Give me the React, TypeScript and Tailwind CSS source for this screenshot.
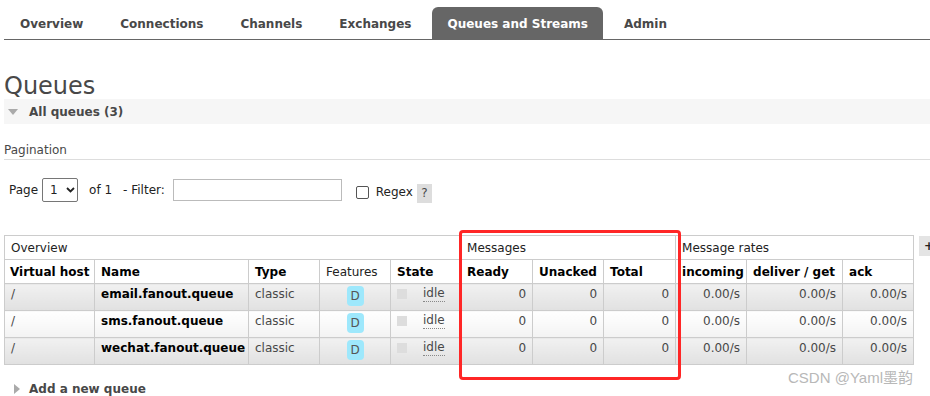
import React from "react";

const tabs = ["Overview", "Connections", "Channels", "Exchanges", "Queues and Streams", "Admin"];

const rows = [
  { name: "email.fanout.queue", alt: 1 },
  { name: "sms.fanout.queue", alt: 2 },
  { name: "wechat.fanout.queue", alt: 1 },
];

const widths = [90, 154, 71, 71, 70, 72, 71, 72, 71, 96, 71];

export default function App() {
  return (
    <div className="relative w-[930px] h-[396px] overflow-hidden bg-white pl-[4px] font-['DejaVu_Sans',Verdana,sans-serif] text-[12px] text-[#484848]">
      {/* Nav */}
      <div className="flex gap-[5px] border-b border-[#666] pt-[7px]">
        {tabs.map((t) => (
          <div
            key={t}
            className={
              t === "Queues and Streams"
                ? "flex h-[32px] items-center rounded-t-[6px] bg-[#666] px-[15px] pt-[1px] font-bold text-white"
                : "flex h-[32px] items-center px-[16px] pt-[1px] font-bold text-[#484848]"
            }
          >
            {t}
          </div>
        ))}
      </div>

      {/* Heading */}
      <h1 className="mt-[34px] text-[24px] leading-[25px] font-normal text-[#484848]">Queues</h1>

      {/* All queues bar */}
      <div className="flex h-[25px] items-center bg-[#f6f6f6] font-bold">
        <svg width="10" height="6" viewBox="0 0 10 6" className="ml-[4px] mr-[11px]">
          <polygon points="0,0 10,0 5,6" fill="#aaa" />
        </svg>
        All queues (3)
      </div>

      {/* Pagination */}
      <div className="mt-[17px] border-b border-[#ddd] pt-[1px] pb-[1px] leading-[16px]">Pagination</div>

      <div className="mt-[18px] flex h-[24px] items-center text-[#222]">
        <span className="ml-[5px]">Page</span>
        <div className="ml-[4px] flex h-[24px] w-[36px] items-center rounded-[2px] border border-[#767676] bg-white pl-[7px]">
          <span>1</span>
          <svg width="9" height="6" viewBox="0 0 9 6" className="ml-[8px]">
            <polyline points="1,1 4.5,4.5 8,1" fill="none" stroke="#222" strokeWidth="1.8" />
          </svg>
        </div>
        <span className="ml-[11px]">of 1</span>
        <span className="ml-[11px]">- Filter:</span>
        <div className="ml-[8px] h-[22px] w-[169px] border border-[#bbb] bg-white" />
        <div className="ml-[14px] mt-[4px] h-[13px] w-[13px] rounded-[2px] border border-[#555] bg-white" />
        <span className="ml-[7px] mt-[4px]">Regex</span>
        <span className="ml-[4px] mt-[6px] flex h-[19px] w-[15px] items-center justify-center bg-[#ddd] text-[#484848]">?</span>
      </div>

      {/* Table */}
      <div className="mt-[33px] flex items-start">
        <table className="table-fixed border-collapse text-[12px]" style={{ width: 909 }}>
          <colgroup>
            {widths.map((w, i) => (
              <col key={i} style={{ width: w }} />
            ))}
          </colgroup>
          <thead>
            <tr>
              <th colSpan={5} className="h-[24px] border border-[#ccc] px-[6px] text-left font-normal text-[#222]">Overview</th>
              <th colSpan={3} className="h-[24px] border border-[#ccc] px-[6px] text-left font-normal text-[#222]">Messages</th>
              <th colSpan={3} className="h-[24px] border border-[#ccc] px-[6px] text-left font-normal text-[#222]">Message rates</th>
            </tr>
            <tr className="text-[#000]">
              <th className="h-[24px] border border-[#ccc] px-[5px] text-left font-bold whitespace-nowrap">Virtual host</th>
              <th className="h-[24px] border border-[#ccc] px-[6px] text-left font-bold">Name</th>
              <th className="h-[24px] border border-[#ccc] px-[6px] text-left font-bold">Type</th>
              <th className="h-[24px] border border-[#ccc] px-[6px] text-left font-normal text-[#222]">Features</th>
              <th className="h-[24px] border border-[#ccc] px-[6px] text-left font-bold">State</th>
              <th className="h-[24px] border border-[#ccc] px-[6px] text-left font-bold">Ready</th>
              <th className="h-[24px] border border-[#ccc] px-[6px] text-left font-bold">Unacked</th>
              <th className="h-[24px] border border-[#ccc] px-[6px] text-left font-bold">Total</th>
              <th className="h-[24px] border border-[#ccc] pl-[6px] pr-[1px] text-left font-bold whitespace-nowrap">incoming</th>
              <th className="h-[24px] border border-[#ccc] px-[6px] text-left font-bold whitespace-nowrap">deliver / get</th>
              <th className="h-[24px] border border-[#ccc] px-[6px] text-left font-bold">ack</th>
            </tr>
          </thead>
          <tbody>
            {rows.map((r) => {
              const bg =
                r.alt === 1
                  ? "bg-linear-to-b from-[#f1f1f1] to-[#e1e1e1]"
                  : "bg-linear-to-b from-[#ffffff] to-[#f3f3f3]";
              const td = `h-[27px] border border-[#ccc] align-top pt-[2px] leading-[16px] ${bg}`;
              return (
                <tr key={r.name}>
                  <td className={`${td} px-[6px]`}>/</td>
                  <td className={`${td} px-[6px] font-bold text-[#000] whitespace-nowrap`}>{r.name}</td>
                  <td className={`${td} px-[6px]`}>classic</td>
                  <td className={`${td} px-[6px] text-center`}>
                    <span className="inline-flex h-[20px] w-[17px] items-center justify-center rounded-[4px] bg-[#9ee8fc] text-[#555]">D</span>
                  </td>
                  <td className={`${td} px-[6px]`}>
                    <div className="flex items-start">
                      <span className="mt-[3px] h-[10px] w-[10px] bg-[#ddd]" />
                      <span className="ml-[16px] border-b border-dotted border-[#888] leading-[15px]">idle</span>
                    </div>
                  </td>
                  <td className={`${td} px-[6px] text-right`}>0</td>
                  <td className={`${td} px-[6px] text-right`}>0</td>
                  <td className={`${td} px-[6px] text-right`}>0</td>
                  <td className={`${td} px-[6px] text-right`}>0.00/s</td>
                  <td className={`${td} px-[6px] text-right`}>0.00/s</td>
                  <td className={`${td} px-[6px] text-right`}>0.00/s</td>
                </tr>
              );
            })}
          </tbody>
        </table>
        <div className="ml-[5px] mt-[1px] flex h-[20px] w-[20px] shrink-0 items-center justify-center bg-[#e4e4e4] font-bold text-[#222]">
          +
        </div>
      </div>

      {/* Add a new queue */}
      <div className="mt-[16px] flex items-center font-bold leading-[16px]">
        <svg width="6" height="10" viewBox="0 0 6 10" className="ml-[10px] mr-[9px]">
          <polygon points="0,0 6,5 0,10" fill="#aaa" />
        </svg>
        Add a new queue
      </div>

      {/* Annotation overlay */}
      <div className="pointer-events-none absolute left-[459px] top-[230px] h-[150px] w-[222px] rounded-[4px] border-[3px] border-[#ff2626]" />

      {/* Watermark */}
      <div className="pointer-events-none absolute left-[788px] top-[368px] font-['Liberation_Sans','Noto_Sans_CJK_SC',sans-serif] text-[15px] leading-[20px] text-[#b8b8b8]">
        CSDN @Yaml墨韵
      </div>
    </div>
  );
}
